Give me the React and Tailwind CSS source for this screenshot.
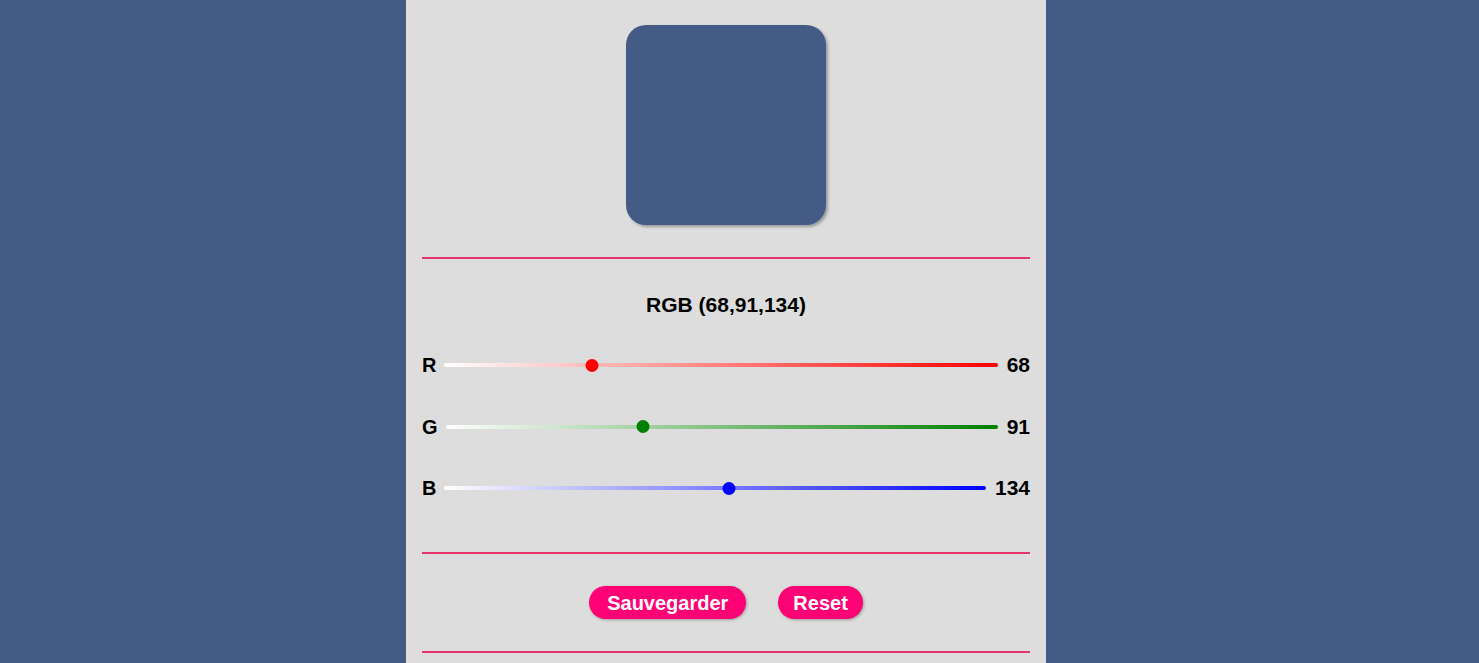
import React from "react";

const rows = [
  { label: "R", value: 68, track: "bg-[linear-gradient(to_right,#ffffff,rgb(255,0,0))]", thumb: "bg-[rgb(255,0,0)]" },
  { label: "G", value: 91, track: "bg-[linear-gradient(to_right,#ffffff,rgb(0,128,0))]", thumb: "bg-[rgb(0,128,0)]" },
  { label: "B", value: 134, track: "bg-[linear-gradient(to_right,#ffffff,rgb(0,0,255))]", thumb: "bg-[rgb(0,0,255)]" },
];

function Divider({ className = "" }) {
  return <div className={"h-[2px] bg-[#e8336b] " + className} />;
}

export default function App() {
  return (
    <div
      className="min-h-screen bg-[#445b86] flex justify-center pr-[27px]"
      style={{ fontFamily: '"Liberation Sans", Arial, sans-serif' }}
    >
      <div className="w-[640px] bg-[#dddddd] px-4 pt-[25px] pb-10">
        <div className="flex justify-center">
          <div className="w-[200px] h-[200px] rounded-[20px] bg-[rgb(68,91,134)] shadow-[2px_2px_3px_rgba(0,0,0,0.3)]" />
        </div>
        <Divider className="mt-8" />
        <p className="mt-[34px] text-center text-[21px] leading-6 font-bold text-black">
          RGB (68,91,134)
        </p>
        <div className="mt-[36px] flex flex-col gap-[37.5px]">
          {rows.map((r) => (
            <div key={r.label} className="flex items-center h-6 gap-[8px]">
              <span className="text-[20px] font-bold leading-6 text-black">{r.label}</span>
              <div className="relative flex-1 h-6 flex items-center">
                <div className={"w-full h-[4px] rounded-full " + r.track} />
                <div
                  className={"absolute w-[13px] h-[13px] rounded-full -translate-x-1/2 " + r.thumb}
                  style={{ left: `${(r.value / 255) * 100}%` }}
                />
              </div>
              <span className="text-[21px] font-bold leading-6 text-black ml-[1px]">{r.value}</span>
            </div>
          ))}
        </div>
        <Divider className="mt-[52px]" />
        <div className="mt-8 flex justify-center gap-8">
          <button className="h-[33px] px-[18px] rounded-full bg-[#ff0075] text-white text-[20px] font-bold shadow-[1px_1px_3px_rgba(0,0,0,0.3)]">
            Sauvegarder
          </button>
          <button className="h-[33px] px-[15px] rounded-full bg-[#ff0075] text-white text-[20px] font-bold shadow-[1px_1px_3px_rgba(0,0,0,0.3)]">
            Reset
          </button>
        </div>
        <Divider className="mt-8" />
      </div>
    </div>
  );
}
